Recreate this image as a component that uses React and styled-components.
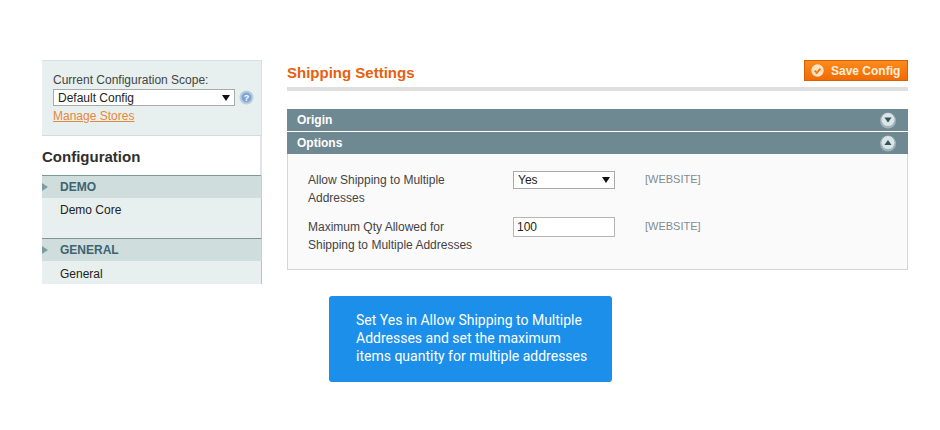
import React from "react";
import styled, { createGlobalStyle } from "styled-components";

const Global = createGlobalStyle`
  html, body { margin: 0; padding: 0; background: #fff; }
  body { font-family: "Liberation Sans", Arial, sans-serif; font-size: 12px; color: #2f2f2f; }
`;
const Page = styled.div`
  width: 940px; height: 430px; box-sizing: border-box; padding: 60px 32px 0 42px;
  display: flex; gap: 25px; align-items: flex-start; overflow: hidden;
`;
const Sidebar = styled.aside`width: 220px; flex: none; display: flex; flex-direction: column;`;
const ScopeBox = styled.div`
  height: 76px; box-sizing: border-box; padding: 12px 0 0 11px;
  background: #e7efef; border: 1px solid #d6e2e2; border-left: 0; border-bottom-color: #d2dcdc;
`;
const ScopeLabel = styled.div`font-size: 12px; line-height: 14px; color: #444;`;
const ScopeRow = styled.div`display: flex; align-items: center; gap: 4px; margin-top: 2px;`;
const FakeSelect = styled.div`
  box-sizing: border-box; width: ${p => p.$w}px; height: ${p => p.$h}px; padding: 0 4px;
  display: flex; align-items: center; justify-content: space-between;
  background: #fff; border: 1px solid #aaa; font-size: 12px; color: #222;
`;
const Caret = styled.span`
  width: 0; height: 0; border-left: 4px solid transparent; border-right: 4px solid transparent;
  border-top: 6px solid #111;
`;
const HelpIcon = styled.svg`width: 15px; height: 15px; flex: none;`;
const ManageLink = styled.a`
  display: block; margin-top: 3px; font-size: 12px; line-height: 14px; color: #e9873a; text-decoration: underline;
`;
const ConfigHead = styled.div`
  height: 40px; box-sizing: border-box; border-right: 2px solid #e0e4e4; border-bottom: 1px solid #7f9599;
  font-size: 15px; font-weight: bold; line-height: 42px; color: #2f2f2f; background: #fff;
`;
const GroupHead = styled.div`
  height: 22px; display: flex; align-items: center; gap: 12px; background: #cfdddd;
  font-size: 12px; font-weight: bold; color: #3d6470; border-right: 1px solid #c4d2d2;
`;
const Arrow = styled.span`
  width: 0; height: 0; border-top: 4px solid transparent; border-bottom: 4px solid transparent;
  border-left: 6px solid #7d9ba3;
`;
const GroupBody = styled.div`
  height: ${p => p.$h}px; box-sizing: border-box; padding: ${p => p.$pad}px 0 0 18px; background: #e7efef;
  border-right: 1px solid #b9c6c6; border-bottom: ${p => (p.$line ? "1px solid #7f9599" : "0")};
  font-size: 12px; line-height: 14px; color: #222;
`;
const Main = styled.main`width: 621px; flex: none;`;
const Header = styled.header`
  height: 31px; box-sizing: border-box; display: flex; justify-content: space-between; align-items: flex-start;
  border-bottom: 4px solid #dfdfdf; margin-bottom: 18px;
`;
const Title = styled.h3`margin: 4px 0 0; font-size: 15px; line-height: 17px; font-weight: bold; color: #e7600c;`;
const SaveButton = styled.button`
  width: 104px; height: 21px; box-sizing: border-box; padding: 0 0 0 6px; display: flex; align-items: center; gap: 7px;
  background: linear-gradient(#fb8a1c, #f06c05); border: 1px solid #d85f04; border-radius: 0;
  font: bold 12px "Liberation Sans", Arial, sans-serif; color: #ffeedd;
`;
const SaveIcon = styled.svg`width: 13px; height: 13px; flex: none;`;
const Bar = styled.div`
  height: 22px; margin-bottom: ${p => p.$gap}px; box-sizing: border-box; padding: 0 11px 0 10px;
  display: flex; align-items: center; justify-content: space-between; background: #6f8992;
  font-size: 12px; font-weight: bold; color: #fff;
`;
const Toggle = styled.svg`width: 18px; height: 18px; flex: none;`;
const Panel = styled.div`
  height: 116px; box-sizing: border-box; padding: 17px 0 0 20px; background: #fafafa;
  border: 1px solid #d6d6d6; border-top: 0;
`;
const FormRow = styled.div`
  display: grid; grid-template-columns: 205px 102px auto; align-items: start;
  margin-bottom: ${p => p.$gap}px;
`;
const FieldLabel = styled.div`font-size: 12px; line-height: 18px; color: #444; width: 180px;`;
const FieldInput = styled.div`
  box-sizing: border-box; width: 102px; height: 20px; margin-top: -1px; padding: 0 3px; line-height: 18px;
  background: #fff; border: 1px solid #b5b5b5; font-size: 12px; color: #222;
`;
const Scope = styled.div`margin-left: 30px; font-size: 11px; line-height: 14px; color: #7f8c94; padding-top: 1px;`;
const Note = styled.div`
  width: 283px; height: 86px; box-sizing: border-box; margin: 26px 0 0 42px; padding: 15px 20px 0 27px;
  background: #1b8fe9; border-radius: 3px; color: #fff;
  font-family: Roboto, sans-serif; font-size: 14px; line-height: 18px;
`;

export default function App() {
  return (
    <>
      <Global />
      <Page>
        <Sidebar>
          <ScopeBox>
            <ScopeLabel>Current Configuration Scope:</ScopeLabel>
            <ScopeRow>
              <FakeSelect $w={182} $h={17}>Default Config<Caret /></FakeSelect>
              <HelpIcon viewBox="0 0 15 15">
                <circle cx="7.5" cy="7.5" r="7" fill="#b9cde2" />
                <circle cx="7.5" cy="7.5" r="5" fill="#7fa5d4" />
                <text x="7.5" y="11" textAnchor="middle" fontSize="9" fontWeight="bold" fontFamily="Liberation Sans" fill="#fff">?</text>
              </HelpIcon>
            </ScopeRow>
            <ManageLink>Manage Stores</ManageLink>
          </ScopeBox>
          <ConfigHead>Configuration</ConfigHead>
          <GroupHead><Arrow />DEMO</GroupHead>
          <GroupBody $h={41} $pad={5} $line>Demo Core</GroupBody>
          <GroupHead><Arrow />GENERAL</GroupHead>
          <GroupBody $h={23} $pad={6}>General</GroupBody>
        </Sidebar>
        <Main>
          <Header>
            <Title>Shipping Settings</Title>
            <SaveButton>
              <SaveIcon viewBox="0 0 13 13">
                <circle cx="6.5" cy="6.5" r="6.2" fill="#fde3c4" />
                <path d="M3.7 6.6 L5.8 8.8 L9.4 4.6" fill="none" stroke="#f07a10" strokeWidth="1.9" />
              </SaveIcon>
              Save Config
            </SaveButton>
          </Header>
          <Bar $gap={1}>
            Origin
            <Toggle viewBox="0 0 18 18">
              <circle cx="9" cy="9.6" r="8" fill="#9fb2b8" />
              <circle cx="9" cy="8.6" r="6.5" fill="#dbe4e6" />
              <path d="M5.4 6.4 H12.6 L9 11.4 Z" fill="#2f5560" />
            </Toggle>
          </Bar>
          <Bar $gap={0}>
            Options
            <Toggle viewBox="0 0 18 18">
              <circle cx="9" cy="9.6" r="8" fill="#9fb2b8" />
              <circle cx="9" cy="8.6" r="6.5" fill="#dbe4e6" />
              <path d="M5.4 11 H12.6 L9 6 Z" fill="#2f5560" />
            </Toggle>
          </Bar>
          <Panel>
            <FormRow $gap={11}>
              <FieldLabel>Allow Shipping to Multiple Addresses</FieldLabel>
              <FakeSelect $w={102} $h={18}>Yes<Caret /></FakeSelect>
              <Scope>[WEBSITE]</Scope>
            </FormRow>
            <FormRow $gap={0}>
              <FieldLabel>Maximum Qty Allowed for Shipping to Multiple Addresses</FieldLabel>
              <FieldInput>100</FieldInput>
              <Scope>[WEBSITE]</Scope>
            </FormRow>
          </Panel>
          <Note>Set Yes in Allow Shipping to Multiple Addresses and set the maximum items quantity for multiple addresses</Note>
        </Main>
      </Page>
    </>
  );
}
